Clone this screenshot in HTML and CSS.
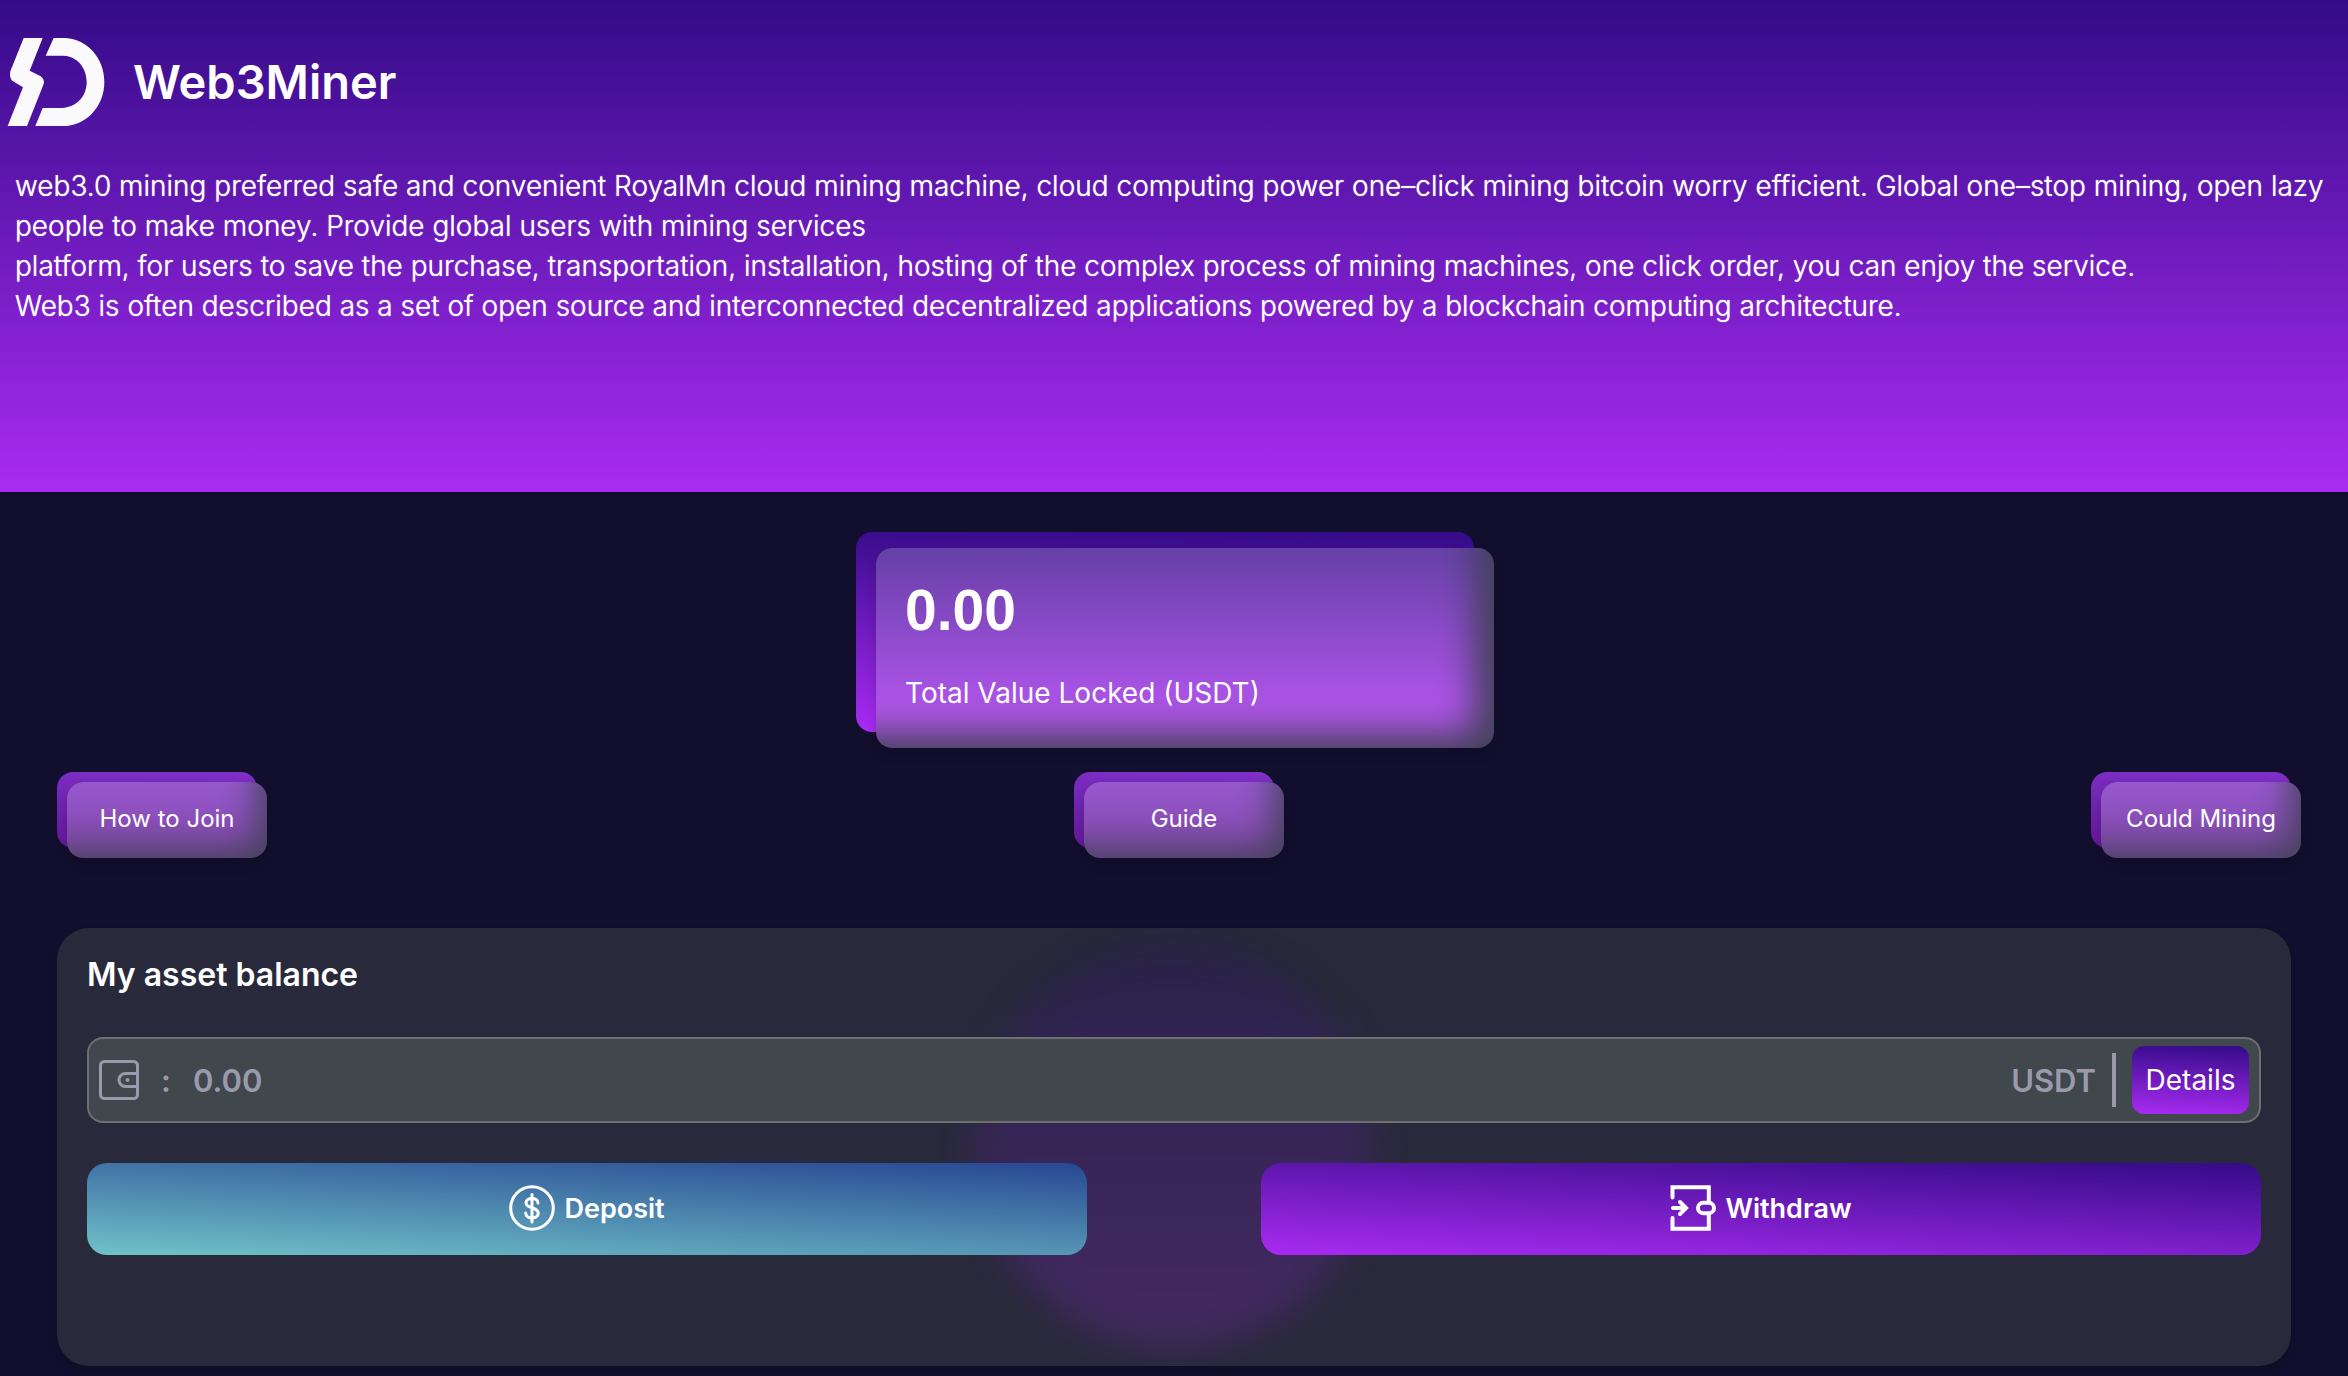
FILE: index.html
```html
<!DOCTYPE html>
<html lang="en">
<head>
  <meta charset="utf-8">
  <meta name="viewport" content="width=device-width, initial-scale=1">
  <title>Web3Miner</title>
  <link rel="stylesheet" href="styles.css">
</head>
<body>
  <header class="hero">
    <div class="brand">
      <svg class="brand-logo" viewBox="20 24 294 264" aria-hidden="true">
        <path d="M70 24H127L88 122L120 138Q134 148 130 162L80 288H22L68 172L38 154Q26 146 30 124Z"/>
        <path d="M160 24H195C262 28 312 85 312 156C312 225 265 280 200 288H105L127 234H185C235 230 259 195 259 156C259 115 232 79 190 77H136Z"/>
      </svg>
      <h1 class="brand-name">Web3Miner</h1>
    </div>
    <p class="intro">web3.0 mining preferred safe and convenient RoyalMn cloud mining machine, cloud computing power one–click mining bitcoin worry efficient. Global one–stop mining, open lazy people to make money. Provide global users with mining services<br>platform, for users to save the purchase, transportation, installation, hosting of the complex process of mining machines, one click order, you can enjoy the service.<br>Web3 is often described as a set of open source and interconnected decentralized applications powered by a blockchain computing architecture.</p>
  </header>

  <main class="content">
    <section class="stat">
      <div class="stat-face">
        <strong class="stat-value">0.00</strong>
        <span class="stat-label">Total Value Locked (USDT)</span>
      </div>
    </section>

    <nav class="shortcuts">
      <button class="shortcut" type="button"><span class="shortcut-face">How to Join</span></button>
      <button class="shortcut" type="button"><span class="shortcut-face">Guide</span></button>
      <button class="shortcut" type="button"><span class="shortcut-face">Could Mining</span></button>
    </nav>

    <section class="panel">
      <h2 class="panel-title">My asset balance</h2>
      <div class="balance">
        <svg class="wallet" viewBox="0 0 40 40" aria-hidden="true">
          <rect x="1.500" y="1.500" width="37" height="37" rx="4"/>
          <path d="M38 13.500H26.500a6.500 6.500 0 0 0 0 13H38"/>
          <circle class="dot" cx="28.500" cy="20" r="2"/>
        </svg>
        <span class="colon">:</span>
        <span class="amount">0.00</span>
        <span class="unit">USDT</span>
        <span class="divider"></span>
        <button class="details" type="button">Details</button>
      </div>
      <div class="actions">
        <button class="action deposit" type="button">
          <svg class="action-icon" viewBox="0 0 46 46" aria-hidden="true">
            <circle cx="23" cy="23" r="21.300"/>
            <path d="M23 9.500V37M29 18C29 12 17 12 17 17.700C17 24 29.300 21.500 29.300 28.300C29.300 34.600 16.700 34.600 16.700 28"/>
          </svg>
          Deposit
        </button>
        <button class="action withdraw" type="button">
          <svg class="action-icon bold" viewBox="0 0 46 46" aria-hidden="true">
            <path d="M2.500 12.500V2.300H38.800V17M38.800 29V43.700H2.500V33M3 23H15.500M10 17L16 23L10 29"/>
            <rect x="28" y="17.800" width="16" height="10.400" rx="5.200"/>
          </svg>
          Withdraw
        </button>
      </div>
    </section>
  </main>
</body>
</html>
```
FILE: styles.css
```css
:root {
  --page: #110f2d;
  --deep: #330b87;
  --bright: #a92bf2;
  --glass: rgba(255, 255, 255, 0.21);
  --muted: #9a9aac;
}

* {
  box-sizing: border-box;
}

body {
  margin: 0;
  min-height: 100vh;
  background: var(--page);
  color: #fff;
  font-family: Inter, "Liberation Sans", sans-serif;
}

button {
  border: 0;
  padding: 0;
  color: inherit;
  font: inherit;
  cursor: pointer;
}

.hero {
  min-height: 492px;
  padding: 38px 7px 0;
  background: linear-gradient(to top, var(--bright), var(--deep));
}

.brand {
  display: flex;
  align-items: center;
  gap: 28px;
}

.brand-logo {
  width: 98px;
  height: 88px;
  fill: #fafafc;
}

.brand-name {
  margin: 0;
  font-size: 47px;
  font-weight: 600;
  line-height: 64px;
}

.intro {
  margin: 0;
  padding: 40px 0 0 8px;
  font-size: 28px;
  font-weight: 300;
  line-height: 40px;
  text-shadow: 0 0 1px #fff;
}

.content {
  padding: 40px 57px 10px;
}

.stat {
  position: relative;
  left: -9px;
  width: 618px;
  height: 200px;
  margin: 0 auto;
  border-radius: 16px;
  background: linear-gradient(1deg, var(--bright), var(--deep));
}

/* Frosted faces: a blurred copy of the plate behind, under a white tint */
.stat-face,
.shortcut-face {
  position: absolute;
  z-index: 0;
  display: flex;
  border-radius: 16px;
  background: var(--page);
  box-shadow: 0 6px 12px rgba(0, 0, 0, 0.15);
  overflow: hidden;
}

.stat-face::before,
.shortcut-face::before {
  content: "";
  position: absolute;
  z-index: -2;
  filter: blur(18px);
}

.stat-face::after,
.shortcut-face::after {
  content: "";
  position: absolute;
  z-index: -1;
  inset: 0;
  background: var(--glass);
}

.stat-face {
  inset: 16px -20px -16px 20px;
  flex-direction: column;
  justify-content: space-between;
  padding: 30px 29px 35px;
}

.stat-face::before {
  inset: -60px 20px 16px -60px;
  background: linear-gradient(to top, var(--bright), var(--deep) 200px);
}

.stat-value {
  font: 700 57px/64px "Liberation Sans", sans-serif;
}

.stat-label {
  font-size: 28px;
  line-height: 40px;
}

.shortcuts {
  display: flex;
  justify-content: space-between;
  padding-top: 40px;
}

.shortcut {
  position: relative;
  width: 200px;
  height: 76px;
  border-radius: 16px;
  background: linear-gradient(3deg, #641798, #7f30c8);
  font-size: 24px;
}

.shortcut-face {
  inset: 10px -10px -10px 10px;
  align-items: center;
  justify-content: center;
  padding-bottom: 3px;
}

.shortcut-face::before {
  inset: -60px 10px 10px -60px;
  background: linear-gradient(to top, #641798, #7f30c8 76px);
}

.panel {
  position: relative;
  z-index: 0;
  min-height: 438px;
  margin-top: 80px;
  padding: 25px 30px 0;
  border-radius: 32px;
  background: #28293a;
  box-shadow: 0 6px 12px rgba(0, 0, 0, 0.15);
  overflow: hidden;
}

/* Soft disc of light behind the balance controls */
.panel::before {
  content: "";
  position: absolute;
  z-index: -1;
  inset: 0;
  width: 400px;
  height: 400px;
  margin: auto;
  border-radius: 50%;
  background: linear-gradient(to top, var(--bright), var(--deep));
  opacity: 0.22;
  filter: blur(20px);
}

.panel-title {
  margin: 0;
  font-size: 32px;
  font-weight: 600;
  line-height: 44px;
}

.balance {
  display: flex;
  align-items: center;
  height: 86px;
  margin-top: 40px;
  padding: 0 10px;
  border: 2px solid #6f6f6f;
  border-radius: 16px;
  background: #40474d;
  color: var(--muted);
  font-size: 31px;
  font-weight: 600;
}

.wallet {
  width: 40px;
  height: 40px;
  fill: none;
  stroke: var(--muted);
  stroke-width: 3;
}

.wallet .dot {
  fill: var(--muted);
  stroke: none;
}

.colon {
  width: 10px;
  margin: 0 22px;
}

.amount {
  flex: 1;
}

.divider {
  width: 4px;
  height: 54px;
  margin: 0 16px;
  background: var(--muted);
}

.details {
  width: 117px;
  height: 68px;
  border-radius: 12px;
  background: linear-gradient(3deg, var(--bright), var(--deep));
  color: #fff;
  font-size: 28px;
  font-weight: 400;
}

.actions {
  display: flex;
  justify-content: space-between;
  margin-top: 40px;
}

.action {
  display: flex;
  align-items: center;
  justify-content: center;
  gap: 9px;
  width: 46%;
  height: 92px;
  padding-bottom: 2px;
  border-radius: 20px;
  font-size: 27px;
  font-weight: 600;
}

.deposit {
  background: linear-gradient(3deg, #70c2c8, #274793);
}

.withdraw {
  background: linear-gradient(3deg, var(--bright), var(--deep));
}

.action-icon {
  width: 46px;
  height: 46px;
  fill: none;
  stroke: #fff;
  stroke-width: 3;
  stroke-linecap: round;
}

.action-icon.bold {
  stroke-width: 4;
}
```
